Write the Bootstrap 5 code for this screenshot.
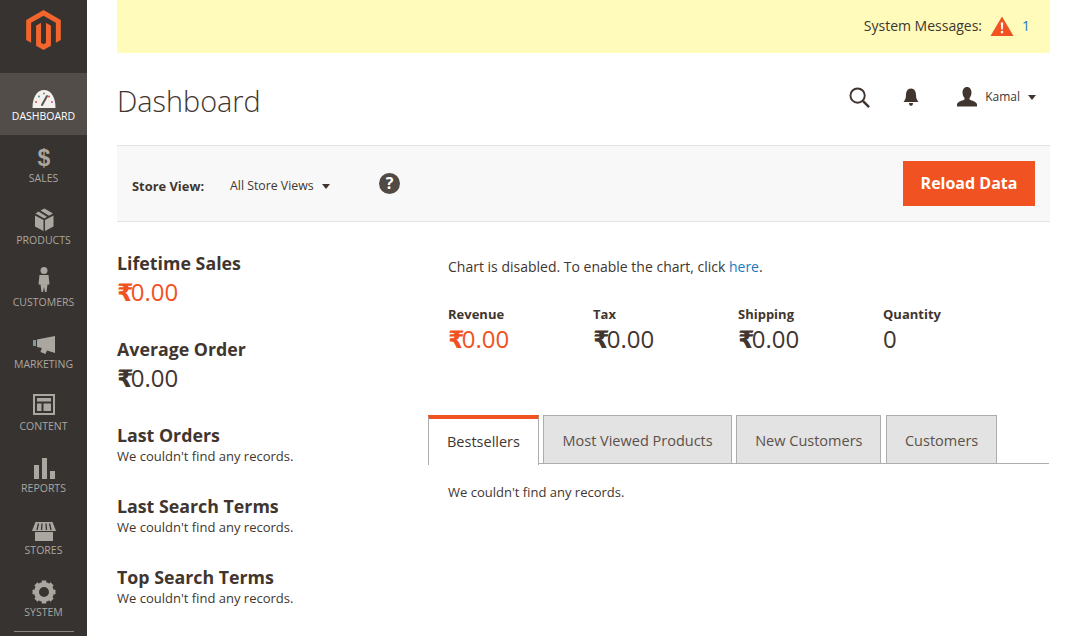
<!DOCTYPE html>
<html lang="en">
<head>
  <meta charset="UTF-8">
  <meta name="viewport" content="width=device-width, initial-scale=1.0">
  <title>Dashboard</title>
  <link href="https://cdn.jsdelivr.net/npm/bootstrap@5.3.0/dist/css/bootstrap.min.css" rel="stylesheet">
  <style>
    html, body { height: 636px; overflow: hidden; }
    body {
      font-family: "Open Sans", "DejaVu Sans", sans-serif;
      font-size: 14px;
      color: #41362f;
      background: #fff;
    }
    .shell { height: 636px; }
    .sidebar { width: 87px; background: #373330; height: 636px; overflow: hidden; }
    .logo-box { height: 73px; padding-top: 10px; }
    .side-item {
      height: 62px;
      color: #aaa6a0;
      font-size: 10.5px;
      text-transform: uppercase;
      text-decoration: none;
      padding-top: 11px;
      line-height: 14px;
    }
    .side-item svg { display: block; height: 24px; margin-bottom: 1px; overflow: visible; }
    .side-item.is-active { background: #524d49; color: #fff; }
    .side-rule { width: 60px; height: 1px; background: #8a8580; margin: 0 auto; }
    .main-area { padding: 0 30px; min-width: 0; }
    .msg-bar {
      height: 53px;
      background: #fffbbb;
      padding-right: 20px;
      padding-bottom: 2px;
      font-size: 14px;
      color: #41362f;
    }
    .msg-bar a { color: #1979c3; text-decoration: none; font-size: 14px; }
    .head-row { height: 92px; }
    .head-tools { margin-top: -4px; }
    .page-title { font-size: 28.8px; font-weight: 300; margin: 0; color: #41362f; line-height: 1.2; padding-top: 5px; }
    .user-name { font-size: 12px; color: #41362f; }
    .down-caret { width: 0; height: 0; border-left: 4.5px solid transparent; border-right: 4.5px solid transparent; border-top: 5px solid #41362f; }
    .bell-icon { margin-left: 33px; }
    .user-icon { margin-left: 38px; }
    .user-caret { margin-left: 8px; margin-right: 14px; }
    .store-bar {
      height: 77px;
      background: #f8f8f8;
      border-top: 1px solid #e3e3e3;
      border-bottom: 1px solid #e3e3e3;
      padding: 0 15px;
    }
    .store-label { font-size: 12.9px; font-weight: 700; width: 98px; padding-top: 6px; }
    .store-value { font-size: 12.3px; width: 103px; padding-top: 6px; }
    .help-dot {
      width: 21px; height: 21px; border-radius: 50%;
      background: #514943; color: #fff; font-weight: 700; font-size: 16px; line-height: 21px; text-align: center;
      margin-left: 46px;
    }
    .btn-reload {
      background: #f15222;
      border: 0;
      border-radius: 0;
      color: #fff;
      font-size: 16px;
      font-weight: 700;
      width: 132px;
      height: 45px;
      padding: 0 0 2px;
    }
    .btn-reload:hover { background: #e04516; color: #fff; }
    .left-col { width: 311px; padding-top: 28px; }
    .right-col { width: 622px; }
    .stat-block { margin-bottom: 28px; }
    .stat-title { font-size: 17.8px; font-weight: 700; line-height: 26px; margin: 0; color: #41362f; }
    .stat-money { font-size: 24px; line-height: 32px; color: #41362f; }
    .rupee-sign { font-weight: 700; letter-spacing: -3px; }
    .is-orange { color: #f15222; }
    .list-block { height: 71px; }
    .none-text { font-size: 13px; line-height: 16px; color: #41362f; }
    .chart-note { padding: 35px 0 0 20px; font-size: 14px; line-height: 20px; height: 82px; }
    .chart-note a { color: #1979c3; text-decoration: none; }
    .totals-row { padding-left: 20px; height: 111px; }
    .total-cell { width: 145px; }
    .total-label { font-size: 13px; font-weight: 700; line-height: 20px; }
    .total-value { font-size: 24px; line-height: 32px; margin-top: -1px; }
    .tab-strip { border-bottom: 1px solid #adadad; height: 49px; gap: 4.5px; margin-right: 1px; }
    .tab-btn {
      height: 49px;
      padding: 0 18px;
      background: #e3e3e3;
      border: 1px solid #adadad;
      color: #5c5049;
      font-size: 14.5px;
      line-height: 50px;
      white-space: nowrap;
      text-decoration: none;
    }
    .tab-btn.is-current {
      background: #fff;
      color: #41362f;
      border-top: 4px solid #f15222;
      border-bottom: 0;
      line-height: 46px;
      margin-bottom: -1px;
      height: 50px;
    }
    .tab-body { padding: 20px; font-size: 13px; line-height: 16px; }
  </style>
</head>
<body>

<div class="shell d-flex">
  <!-- Sidebar -->
  <nav class="sidebar flex-shrink-0 d-flex flex-column">
    <div class="logo-box d-flex justify-content-center">
      <svg width="35" height="40" viewBox="1.6 0 20.8 24">
        <path fill="#f2652d" d="M12 24l-4.455-2.572v-12l2.97-1.715v12.001l1.485.902 1.485-.902V7.713l2.971 1.715v12L12 24zM22.391 6v12l-2.969 1.714V7.713L12 3.43 4.574 7.713v12.001L1.609 18V6L12 0l10.391 6z"/>
      </svg>
    </div>
    <a href="#" class="side-item is-active d-flex flex-column align-items-center">
      <svg width="24" height="24" viewBox="0 0 24 24">
        <path fill="#f4f1ea" d="M0.500 24 C0.500 13 5 6 12 6 C19 6 23.500 13 23.500 24 Z"/>
        <path fill="none" stroke="#555" stroke-width="2" stroke-linecap="round" d="M10 21 L15 12"/>
        <circle cx="4" cy="18" r="0.900" fill="#d33"/>
        <circle cx="7" cy="12.500" r="0.900" fill="#28a"/>
        <circle cx="12" cy="9.500" r="0.900" fill="#777"/>
        <circle cx="17" cy="12.500" r="0.900" fill="#d33"/>
        <circle cx="20" cy="18" r="0.900" fill="#c3b"/>
      </svg>
      Dashboard
    </a>
    <a href="#" class="side-item d-flex flex-column align-items-center">
      <svg width="24" height="24" viewBox="0 0 24 24">
        <text x="12" y="20" text-anchor="middle" font-family="Liberation Sans" font-weight="700" font-size="23" fill="#aaa6a0">$</text>
      </svg>
      Sales
    </a>
    <a href="#" class="side-item d-flex flex-column align-items-center">
      <svg width="24" height="24" viewBox="0 0 24 24">
        <path fill="#aaa6a0" d="M3 7.500 L11.500 12 V23 L3 18.500 Z M13 12 L21.500 7.500 V18.500 L13 23 Z"/>
        <path fill="#aaa6a0" d="M8.500 2.500 L12.500 0.500 L21 5.500 L17 7.800 Z M6.500 3.500 L15 8.800 L12.300 10.500 L3.500 5.500 Z"/>
      </svg>
      Products
    </a>
    <a href="#" class="side-item d-flex flex-column align-items-center">
      <svg width="24" height="24" viewBox="0 0 24 24">
        <circle cx="12" cy="0.500" r="3.500" fill="#aaa6a0"/>
        <path fill="#aaa6a0" d="M7.500 5 H16.500 L17.500 14.500 H15.500 L14.500 22 H13 L12 17 L11 22 H9.500 L8.500 14.500 H6.500 Z"/>
      </svg>
      Customers
    </a>
    <a href="#" class="side-item d-flex flex-column align-items-center">
      <svg width="24" height="24" viewBox="0 0 24 24">
        <path fill="#7d9aa0" d="M1 8 H4 V14 H1 Z"/>
        <path fill="#aaa6a0" d="M5 7.500 L23 4 V21 L15 18.500 L13.500 22 L8.500 20 L9.800 16 L5 15 Z"/>
      </svg>
      Marketing
    </a>
    <a href="#" class="side-item d-flex flex-column align-items-center">
      <svg width="24" height="24" viewBox="0 0 24 24">
        <path fill="#aaa6a0" fill-rule="evenodd" d="M1 0 H23 V21 H1 Z M3 2 V19 H21 V2 Z"/>
        <path fill="#aaa6a0" d="M5 4 H19 V7.500 H5 Z M5 9.500 H9.500 V17 H5 Z M11.500 9.500 H19 V17 H11.500 Z"/>
      </svg>
      Content
    </a>
    <a href="#" class="side-item d-flex flex-column align-items-center">
      <svg width="24" height="24" viewBox="0 0 24 24">
        <path fill="#aaa6a0" d="M2 9 H7 V23 H2 Z M10 2 H15 V23 H10 Z M18 15 H23 V23 H18 Z"/>
      </svg>
      Reports
    </a>
    <a href="#" class="side-item d-flex flex-column align-items-center">
      <svg width="24" height="24" viewBox="0 0 24 24">
        <path fill="#aaa6a0" d="M3 14 H21 V23 H3 Z"/>
        <path fill="#aaa6a0" d="M3.500 4 H20.500 L24 13 H0 Z"/>
        <path fill="none" stroke="#373330" stroke-width="1.300" d="M6.500 5.500 L5 12 M10 5.500 L9.500 12 M14 5.500 L14.500 12 M17.500 5.500 L19 12"/>
      </svg>
      Stores
    </a>
    <a href="#" class="side-item d-flex flex-column align-items-center">
      <svg width="24" height="24" viewBox="0 0 24 24">
        <circle cx="12" cy="12" r="7.500" fill="none" stroke="#aaa6a0" stroke-width="5"/>
        <path fill="none" stroke="#aaa6a0" stroke-width="4.500" d="M12 0.500 V4 M12 20 V23.500 M0.500 12 H4 M20 12 H23.500 M3.900 3.900 L6.300 6.300 M17.700 17.700 L20.100 20.100 M3.900 20.100 L6.300 17.700 M17.700 6.300 L20.100 3.900"/>
      </svg>
      System
    </a>
    <div class="side-rule"></div>
  </nav>

  <!-- Contenu -->
  <div class="main-area flex-grow-1">
    <div class="msg-bar d-flex justify-content-end align-items-center">
      <span>System Messages:</span>
      <svg class="ms-2" width="24" height="20" viewBox="0 0 24 20">
        <path fill="#f15222" d="M12 0.500 L23.500 20 H0.500 Z"/>
        <path fill="#fff" d="M10.800 6.500 H13.200 L12.800 13.500 H11.200 Z M10.900 15 H13.100 V17.300 H10.900 Z"/>
      </svg>
      <a href="#" class="ms-2">1</a>
    </div>

    <div class="head-row d-flex justify-content-between align-items-center">
      <h1 class="page-title">Dashboard</h1>
      <div class="head-tools d-flex align-items-center">
        <svg width="21" height="21" viewBox="0 0 22 22">
          <circle cx="9" cy="9" r="7.500" fill="none" stroke="#41362f" stroke-width="2"/>
          <path stroke="#41362f" stroke-width="2.600" d="M14.500 14.500 L21 21"/>
        </svg>
        <svg class="bell-icon" width="16" height="18" viewBox="0 0 16 18">
          <path fill="#41362f" d="M8 0.500 C11.500 0.500 13 3.500 13 7 C13 10.500 14 12 15.500 14 H0.500 C2 12 3 10.500 3 7 C3 3.500 4.500 0.500 8 0.500 Z"/>
          <path fill="#41362f" d="M6 15 H10 C10 17 9 17.800 8 17.800 C7 17.800 6 17 6 15 Z"/>
        </svg>
        <svg class="user-icon" width="20" height="20" viewBox="0 0 20 20">
          <path fill="#41362f" d="M10 0 C13 0 14.500 2.500 14.500 5.500 C14.500 8 13.500 10 12.500 11 V12.500 C15 13.800 19 14.500 20 17 V19.500 H0 V17 C1 14.500 5 13.800 7.500 12.500 V11 C6.500 10 5.500 8 5.500 5.500 C5.500 2.500 7 0 10 0 Z"/>
        </svg>
        <span class="user-name ms-2">Kamal</span>
        <span class="down-caret user-caret"></span>
      </div>
    </div>

    <div class="store-bar d-flex align-items-center">
      <span class="store-label">Store View:</span>
      <span class="store-value d-flex align-items-center">All Store Views <span class="down-caret ms-2"></span></span>
      <span class="help-dot">?</span>
      <button type="button" class="btn btn-reload ms-auto">Reload Data</button>
    </div>

    <div class="d-flex">
      <div class="left-col flex-shrink-0">
        <div class="stat-block">
          <h2 class="stat-title">Lifetime Sales</h2>
          <div class="stat-money is-orange"><span class="rupee-sign">₹</span>0.00</div>
        </div>
        <div class="stat-block">
          <h2 class="stat-title">Average Order</h2>
          <div class="stat-money"><span class="rupee-sign">₹</span>0.00</div>
        </div>
        <div class="list-block">
          <h2 class="stat-title">Last Orders</h2>
          <div class="none-text">We couldn't find any records.</div>
        </div>
        <div class="list-block">
          <h2 class="stat-title">Last Search Terms</h2>
          <div class="none-text">We couldn't find any records.</div>
        </div>
        <div class="list-block">
          <h2 class="stat-title">Top Search Terms</h2>
          <div class="none-text">We couldn't find any records.</div>
        </div>
      </div>
      <div class="right-col">
        <div class="chart-note">Chart is disabled. To enable the chart, click <a href="#">here</a>.</div>
        <div class="totals-row d-flex">
          <div class="total-cell">
            <div class="total-label">Revenue</div>
            <div class="total-value is-orange"><span class="rupee-sign">₹</span>0.00</div>
          </div>
          <div class="total-cell">
            <div class="total-label">Tax</div>
            <div class="total-value"><span class="rupee-sign">₹</span>0.00</div>
          </div>
          <div class="total-cell">
            <div class="total-label">Shipping</div>
            <div class="total-value"><span class="rupee-sign">₹</span>0.00</div>
          </div>
          <div class="total-cell">
            <div class="total-label">Quantity</div>
            <div class="total-value">0</div>
          </div>
        </div>
        <div class="tab-strip d-flex">
          <a href="#" class="tab-btn is-current">Bestsellers</a>
          <a href="#" class="tab-btn">Most Viewed Products</a>
          <a href="#" class="tab-btn">New Customers</a>
          <a href="#" class="tab-btn">Customers</a>
        </div>
        <div class="tab-body">We couldn't find any records.</div>
      </div>
    </div>
  </div>
</div>

<script src="https://cdn.jsdelivr.net/npm/bootstrap@5.3.0/dist/js/bootstrap.bundle.min.js"></script>
</body>
</html>
